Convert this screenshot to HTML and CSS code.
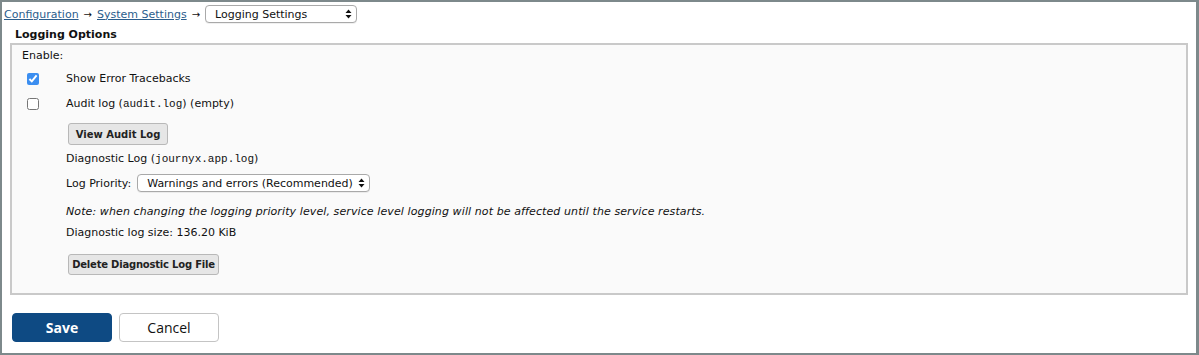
FILE: index.html
```html
<!DOCTYPE html>
<html lang="en">
<head>
  <meta charset="UTF-8" />
  <title>Logging Settings</title>
  <link rel="stylesheet" href="styles.css">
</head>
<body>

<div class="frame">

  <!-- Breadcrumb -->
  <div class="crumbs">
    <a href="#">Configuration</a>
    <span class="arrow">&rarr;</span>
    <a href="#">System Settings</a>
    <span class="arrow">&rarr;</span>
    <span class="select-wrap">
      <select class="sel sel-page">
        <option>Logging Settings</option>
      </select>
      <svg class="sel-arrows" width="7" height="10" viewBox="0 0 7 10"><path d="M3.5 0.5 L6.5 4 L0.5 4 Z M0.5 6 L6.5 6 L3.5 9.5 Z" fill="#111"/></svg>
    </span>
  </div>

  <div class="section-title">Logging Options</div>

  <div class="panel">
    <div class="enable">Enable:</div>

    <div class="opt">
      <span class="check-col"><input type="checkbox" checked></span>
      <label>Show Error Tracebacks</label>
    </div>
    <div class="opt">
      <span class="check-col"><input type="checkbox"></span>
      <label>Audit log (<code>audit.log</code>) (empty)</label>
    </div>

    <div class="indent">
      <button class="btn btn-view">View Audit Log</button>

      <div class="diag">Diagnostic Log (<code>journyx.app.log</code>)</div>

      <div class="priority">
        <span>Log Priority:</span>
        <span class="select-wrap">
          <select class="sel sel-priority">
            <option>Warnings and errors (Recommended)</option>
          </select>
          <svg class="sel-arrows" width="7" height="10" viewBox="0 0 7 10"><path d="M3.5 0.5 L6.5 4 L0.5 4 Z M0.5 6 L6.5 6 L3.5 9.5 Z" fill="#111"/></svg>
        </span>
      </div>

      <div class="note">Note: when changing the logging priority level, service level logging will not be affected until the service restarts.</div>
      <div class="size">Diagnostic log size: 136.20 KiB</div>

      <button class="btn btn-delete">Delete Diagnostic Log File</button>
    </div>
  </div>

  <div class="actions">
    <button class="btn-save">Save</button>
    <button class="btn-cancel">Cancel</button>
  </div>

</div>

</body>
</html>
```

FILE: styles.css
```css
* {
  box-sizing: border-box;
  margin: 0;
  padding: 0;
}

body {
  font-family: "DejaVu Sans", Verdana, sans-serif;
  font-size: 11px;
  color: #111;
  background: #fff;
}

.frame {
  height: 355px;
  border: 2px solid #7d898b;
  border-right-width: 3px;
}

/* breadcrumb */
.crumbs {
  height: 24px;
  padding-left: 2px;
  display: flex;
  align-items: center;
  gap: 5px;
}

.crumbs a {
  color: #2b5d8c;
  text-decoration: underline;
}

.crumbs .arrow {
  font-size: 10px;
}

.select-wrap {
  position: relative;
  display: inline-flex;
}

.sel {
  appearance: none;
  font-family: "DejaVu Sans", Verdana, sans-serif;
  font-size: 11px;
  color: #111;
  height: 18px;
  padding: 0 0 0 9px;
  border: 1px solid #a9a9a9;
  border-radius: 4px;
  background: #fff;
  box-shadow: 0 1px 0 rgba(0, 0, 0, 0.06);
}

.sel-page {
  width: 152px;
}

.sel-priority {
  width: 233px;
}

.sel-arrows {
  position: absolute;
  right: 5px;
  top: 4px;
  pointer-events: none;
}

.section-title {
  height: 17px;
  line-height: 17px;
  padding-left: 13px;
  font-weight: bold;
}

/* options panel */
.panel {
  margin: 0 8px;
  border: 2px solid #c9c9c9;
  background: #fafafa;
  padding: 0 10px 18px;
}

.enable {
  height: 21px;
  line-height: 21px;
}

.opt {
  height: 25px;
  display: flex;
  align-items: center;
}

.check-col {
  width: 44px;
  display: flex;
  align-items: center;
}

.check-col input {
  width: 12px;
  height: 12px;
  margin: 1px 0 0 5px;
  accent-color: #3b8ef0;
}

code {
  font-family: "Liberation Mono", "Courier New", monospace;
  font-size: 11px;
}

.indent {
  padding-left: 44px;
}

.btn {
  display: block;
  font-family: "DejaVu Sans", Verdana, sans-serif;
  font-size: 10px;
  font-weight: bold;
  white-space: nowrap;
  color: #222;
  background: #e6e6e6;
  border: 1px solid #b8b8b8;
  border-radius: 3px;
  margin-left: 2px;
  padding: 0;
}

.btn-view {
  width: 100px;
  height: 22px;
  margin-top: 7px;
}

.btn-delete {
  width: 151px;
  height: 21px;
  margin-top: 11px;
  letter-spacing: -0.2px;
}

.diag {
  margin-top: 4px;
  line-height: 20px;
}

.priority {
  margin-top: 1px;
  height: 26px;
  display: flex;
  align-items: center;
  gap: 6px;
}

.note {
  margin-top: 6px;
  line-height: 20px;
  font-style: italic;
  letter-spacing: 0.1px;
}

.size {
  margin-top: 1px;
  line-height: 20px;
}

/* save / cancel */
.actions {
  display: flex;
  gap: 7px;
  margin: 18px 0 0 10px;
}

.btn-save,
.btn-cancel {
  width: 100px;
  height: 29px;
  font-family: "Open Sans", sans-serif;
  font-size: 14px;
  border-radius: 4px;
}

.btn-save {
  background: #0e4a83;
  color: #fff;
  font-weight: bold;
  border: 1px solid #0e4a83;
}

.btn-cancel {
  background: #fff;
  color: #111;
  border: 1px solid #c4c4c4;
}
```
